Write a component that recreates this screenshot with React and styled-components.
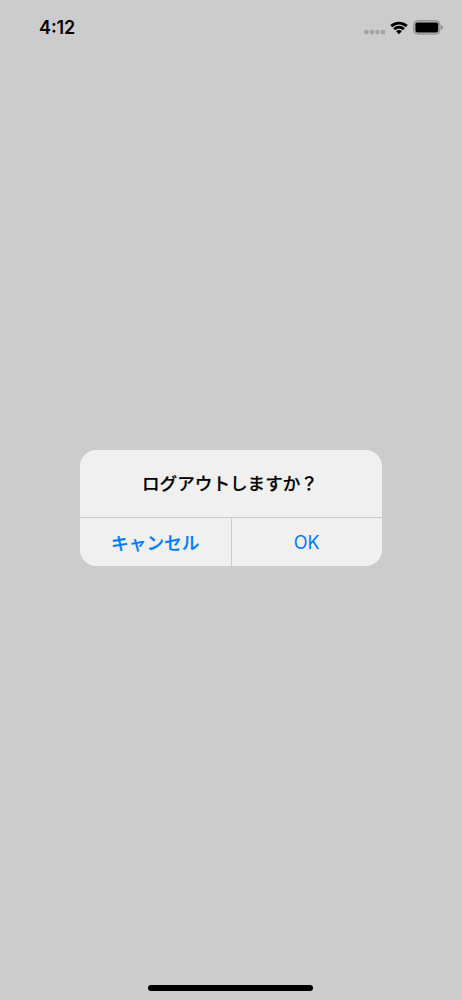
import React from "react";
import styled, { createGlobalStyle } from "styled-components";

export default function App() {
  return (
    <>
      <GlobalStyle />
      <Screen>
        <StatusBar>
          <Time>4:12</Time>
          <StatusIcons>
            <SignalDots />
            <WifiIcon />
            <BatteryIcon />
          </StatusIcons>
        </StatusBar>
        <Content>
          <Dialog role="alertdialog">
            <Title>ログアウトしますか？</Title>
            <Actions>
              <ActionButton $bold>キャンセル</ActionButton>
              <ActionButton>OK</ActionButton>
            </Actions>
          </Dialog>
        </Content>
        <HomeIndicator />
      </Screen>
    </>
  );
}

const SignalDots = () => (
  <svg width="22" height="14" viewBox="0 0 22 14" fill="#a3a3a3">
    <rect x="0.3" y="9" width="4.1" height="4.2" rx="1.3" />
    <rect x="5.9" y="9" width="4.1" height="4.2" rx="1.3" />
    <rect x="11.4" y="9" width="4.1" height="4.2" rx="1.3" />
    <rect x="17" y="9" width="4.1" height="4.2" rx="1.3" />
  </svg>
);

const WifiIcon = () => (
  <svg width="19" height="14" viewBox="0.5 0 19 14" fill="#000">
    <path d="M9.500 3.400c2.400 0 4.600.9 6.300 2.500.2.200.4.200.6 0l1.500-1.500c.2-.2.200-.4 0-.6C13.300-.4 5.700-.4 1.100 3.800c-.2.200-.2.400 0 .6l1.500 1.500c.2.200.4.200.6 0C4.900 4.300 7.100 3.400 9.500 3.400z" />
    <path d="M9.500 7.700c1.300 0 2.500.5 3.500 1.300.2.200.4.200.6 0l1.500-1.500c.2-.2.200-.4 0-.6-3.100-2.900-8.100-2.900-11.200 0-.2.200-.2.400 0 .6L5.400 9c.2.200.4.200.6 0C7 8.200 8.200 7.700 9.500 7.700z" />
    <path d="M12.100 10.500c.2-.2.200-.4 0-.6-1.500-1.200-3.700-1.200-5.200 0-.2.200-.2.400 0 .6l2.300 2.500c.2.200.4.200.6 0z" />
  </svg>
);

const BatteryIcon = () => (
  <svg width="31" height="15" viewBox="0 0 31 15">
    <rect x="0.7" y="0.7" width="26.2" height="13.4" rx="4" fill="#b9b9b9" stroke="#858585" strokeWidth="1" />
    <rect x="2.4" y="2.4" width="22.8" height="10" rx="1.8" fill="#000" />
    <path d="M28.2 5.1v4.6c1-.4 1.500-1.300 1.500-2.300s-.5-1.900-1.500-2.300z" fill="#7d7d7d" />
  </svg>
);

const GlobalStyle = createGlobalStyle`
  body {
    margin: 0;
  }
`;

const Screen = styled.div`
  display: flex;
  flex-direction: column;
  align-items: center;
  width: 462px;
  height: 1000px;
  overflow: hidden;
  background: #ccc;
  font-family: Inter, "Noto Sans CJK JP", sans-serif;
`;

const StatusBar = styled.header`
  display: flex;
  justify-content: space-between;
  align-items: center;
  box-sizing: border-box;
  width: 100%;
  height: 55px;
  padding: 0 18px 0 39px;
`;

const Time = styled.span`
  font-size: 18px;
  font-weight: 600;
  font-feature-settings: "case";
  letter-spacing: -0.1px;
`;

const StatusIcons = styled.div`
  display: flex;
  align-items: center;
  gap: 4px;
`;

const Content = styled.main`
  display: flex;
  flex: 1;
  align-items: flex-start;
  padding-top: 395px;
`;

const Dialog = styled.section`
  width: 302px;
  height: 116px;
  border-radius: 16px;
  background: #f0f0f0;
  overflow: hidden;
`;

const Title = styled.h1`
  display: flex;
  justify-content: center;
  align-items: center;
  box-sizing: border-box;
  height: 67px;
  margin: 0;
  padding: 0 2px 2px 0;
  font-size: 17.6px;
  font-weight: 500;
  -webkit-text-stroke: 0.2px currentColor;
`;

const Actions = styled.div`
  display: flex;
  box-sizing: border-box;
  height: 49px;
  border-top: 1px solid #cbcbcb;
`;

const ActionButton = styled.button`
  flex: 1;
  padding: 0 0 ${(props) => (props.$bold ? 1 : 0)}px;
  border: 0;
  background: none;
  color: #007aff;
  font-family: inherit;
  font-size: ${(props) => (props.$bold ? 17.7 : 18)}px;
  font-weight: ${(props) => (props.$bold ? 500 : 400)};
  -webkit-text-stroke: ${(props) => (props.$bold ? "0.2px currentColor" : "0")};

  & + & {
    border-left: 1px solid #cbcbcb;
  }
`;

const HomeIndicator = styled.div`
  width: 165px;
  height: 6px;
  margin: 0 1px 9px 0;
  border-radius: 3px;
  background: #000;
`;
